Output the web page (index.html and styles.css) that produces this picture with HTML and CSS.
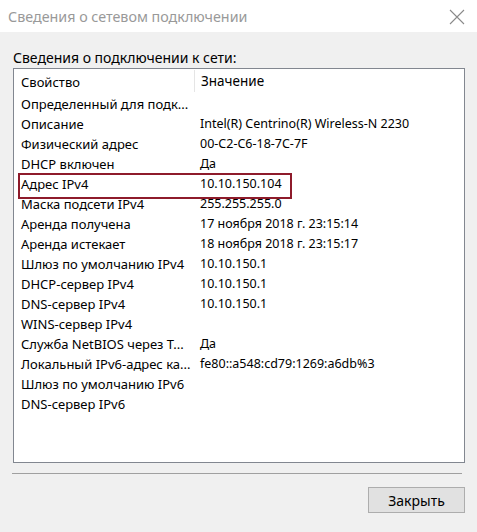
FILE: index.html
```html
<!DOCTYPE html>
<html lang="ru">
<head>
    <meta charset="UTF-8">
    <title>Сведения о сетевом подключении</title>
    <link rel="stylesheet" href="styles.css">
</head>
<body>
    <div class="window">
        <div class="titlebar">
            <span class="title">Сведения о сетевом подключении</span>
            <svg class="close" width="16" height="16" viewBox="0 0 16 16">
                <path d="M1 1 L15 15 M15 1 L1 15" stroke="#8a8a8a" stroke-width="1.1" fill="none"/>
            </svg>
        </div>

        <div class="content">
            <div class="group-label">Сведения о подключении к сети:</div>

            <div class="listbox">
                <div class="list-header">
                    <div class="col-prop">Свойство</div>
                    <div class="col-val">Значение</div>
                </div>
                <div id="rows"></div>
                <!-- красная рамка вокруг строки адреса -->
                <div class="highlight"></div>
            </div>

            <div class="separator"></div>

            <div class="footer">
                <button class="btn">Закрыть</button>
            </div>
        </div>
    </div>

    <script>
        // свойства подключения
        const props = [
            ['Определенный для подк...', ''],
            ['Описание', 'Intel(R) Centrino(R) Wireless-N 2230'],
            ['Физический адрес', '00-C2-C6-18-7C-7F'],
            ['DHCP включен', 'Да'],
            ['Адрес IPv4', '10.10.150.104'],
            ['Маска подсети IPv4', '255.255.255.0'],
            ['Аренда получена', '17 ноября 2018 г. 23:15:14'],
            ['Аренда истекает', '18 ноября 2018 г. 23:15:17'],
            ['Шлюз по умолчанию IPv4', '10.10.150.1'],
            ['DHCP-сервер IPv4', '10.10.150.1'],
            ['DNS-сервер IPv4', '10.10.150.1'],
            ['WINS-сервер IPv4', ''],
            ['Служба NetBIOS через T...', 'Да'],
            ['Локальный IPv6-адрес ка...', 'fe80::a548:cd79:1269:a6db%3'],
            ['Шлюз по умолчанию IPv6', ''],
            ['DNS-сервер IPv6', '']
        ];

        document.getElementById('rows').innerHTML = props.map(p => `
            <div class="row">
                <div class="col-prop">${p[0]}</div>
                <div class="col-val">${p[1]}</div>
            </div>
        `).join('');
    </script>
</body>
</html>
```

FILE: styles.css
```css
body {
    margin: 0;
    font-family: "Noto Sans", "Liberation Sans", sans-serif;
    font-size: 13px;
    color: #000;
}

.window {
    width: 477px;
    height: 532px;
    background: #f0f0f0;
    display: flex;
    flex-direction: column;
}

.titlebar {
    height: 32px;
    background: #fff;
    display: flex;
    align-items: center;
    justify-content: space-between;
    padding: 0 12px 0 8px;
    flex-shrink: 0;
}

.title {
    font-size: 14.3px;
    color: #999;
}

.close {
    margin-top: 1px;
}

.content {
    padding: 0 12px 0 13px;
}

.group-label {
    margin-top: 18px;
    font-size: 14px;
    line-height: 16px;
    height: 16px;
}

.listbox {
    position: relative;
    margin-top: 2px;
    height: 393px;
    background: #fff;
    border: 1px solid #828790;
}

.list-header,
.row {
    display: flex;
    line-height: 20px;
    height: 20px;
    white-space: nowrap;
}

.list-header {
    height: 25px;
    line-height: 25px;
}

.col-prop {
    width: 173px;
    padding-left: 7px;
    overflow: hidden;
}

.row .col-val {
    font-size: 12.5px;
}

.list-header .col-prop {
    border-right: 1px solid #e5e5e5;
    height: 22px;
    margin-top: 1px;
    line-height: 24px;
}

.list-header .col-val {
    font-size: 13.5px;
}

.col-val {
    padding-left: 6px;
}

.highlight {
    position: absolute;
    left: 4px;
    top: 104px;
    width: 270px;
    height: 22px;
    border: 2px solid #8e1b2b;
}

.separator {
    margin: 10px 3px 0 -1px;
    height: 1px;
    background: #a0a0a0;
}

.footer {
    display: flex;
    justify-content: flex-end;
    margin-top: 13px;
}

.btn {
    width: 97px;
    height: 26px;
    background: #e1e1e1;
    border: 1px solid #adadad;
    font-family: "Noto Sans", "Liberation Sans", sans-serif;
    font-size: 14px;
    color: #000;
    padding: 0;
}
```
